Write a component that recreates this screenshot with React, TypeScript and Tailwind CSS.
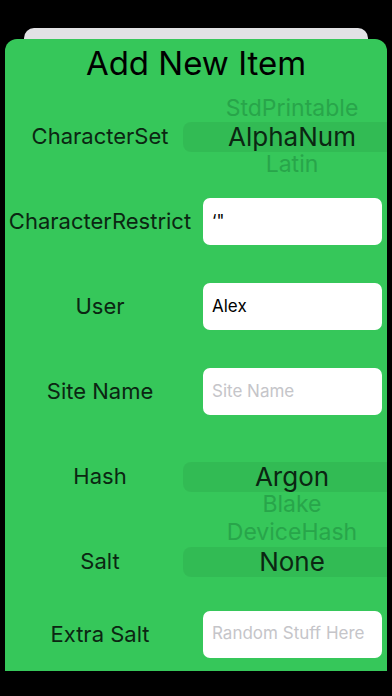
import React from 'react';

const font = { fontFamily: 'Inter, "Noto Sans", sans-serif' };

type PickerProps = { above: string[]; selected: string; below: string[] };

function Picker({ above, selected, below }: PickerProps) {
    // pad so the selected row stays in the middle of the column
    const pad = Math.max(above.length, below.length);
    const top = [...Array(pad - above.length).fill(''), ...above];
    const bottom = [...below, ...Array(pad - below.length).fill('')];

    return (
        <div className="flex-1 h-full flex flex-col justify-center">
            {top.map((t, i) => (
                <div key={'a' + i} className="shrink-0 h-[28px] flex items-center justify-center pl-[14px] text-[23px] text-[#28a54a]">
                    {t}
                </div>
            ))}
            <div className="shrink-0 h-[30px] -my-[1px] flex items-center justify-center pl-[14px] bg-black/[0.06] rounded-l-[8px] text-[26px] text-[#0b2612]">
                {selected}
            </div>
            {bottom.map((t, i) => (
                <div key={'b' + i} className="shrink-0 h-[28px] flex items-center justify-center pl-[14px] text-[23px] text-[#28a54a]">
                    {t}
                </div>
            ))}
        </div>
    );
}

function PickerRow({ label, ...rest }: { label: string } & PickerProps) {
    return (
        <div className="h-[85px] flex items-center">
            <div className="w-[178px] pl-[12px] text-center text-[22px] text-[#0b2612]">{label}</div>
            <Picker {...rest} />
        </div>
    );
}

function InputRow({ label, value, placeholder, height = 85 }: { label: string; value?: string; placeholder?: string; height?: number }) {
    return (
        <div className={`flex items-center ${height === 85 ? 'h-[85px]' : 'h-[60px]'}`}>
            <div className="w-[190px] text-center text-[22px] text-[#0b2612] whitespace-nowrap">{label}</div>
            <div className="ml-[8px] w-[179px] h-[47px] bg-white rounded-[7px] flex items-center px-[9px] text-[17px]">
                {value ? (
                    <span className="text-black">{value}</span>
                ) : (
                    <span className="text-[#c5c5c9]">{placeholder}</span>
                )}
            </div>
        </div>
    );
}

export default function App() {
    return (
        <div className="w-full h-[696px] bg-black overflow-hidden pt-[28px]" style={font}>
            <div className="mx-[24px] h-[22px] bg-[#e2e2e5] rounded-t-[10px]" />
            <div className="relative -mt-[11px] mx-[5px] h-[632px] bg-[#36c75a] rounded-t-[12px]">
                <div className="h-[55px] pt-[5px] text-center text-[33px] leading-[38px] text-black">
                    Add New Item
                </div>
                <PickerRow label="CharacterSet" above={['StdPrintable']} selected="AlphaNum" below={['Latin']} />
                <InputRow label="CharacterRestrict" value={'\u2018"'} />
                <InputRow label="User" value="Alex" />
                <InputRow label="Site Name" placeholder="Site Name" />
                <PickerRow label="Hash" above={[]} selected="Argon" below={['Blake', 'DeviceHash']} />
                <PickerRow label="Salt" above={[]} selected="None" below={[]} />
                <InputRow label="Extra Salt" placeholder="Random Stuff Here" height={60} />
            </div>
        </div>
    );
}
